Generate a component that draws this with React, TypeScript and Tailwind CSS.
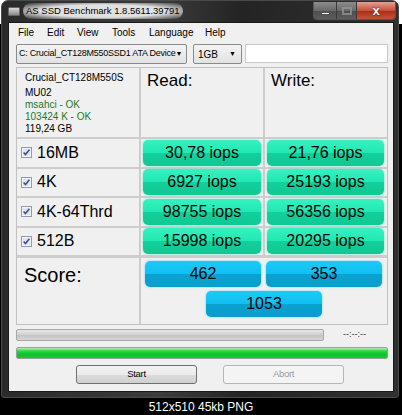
import React from "react";

type Row = { name: string; read: string; write: string };

const rows: Row[] = [
  { name: "16MB", read: "30,78 iops", write: "21,76 iops" },
  { name: "4K", read: "6927 iops", write: "25193 iops" },
  { name: "4K-64Thrd", read: "98755 iops", write: "56356 iops" },
  { name: "512B", read: "15998 iops", write: "20295 iops" },
];

const sans = "font-['Liberation_Sans',Arial,sans-serif]";

function CheckBox() {
  return (
    <svg width="11" height="11" viewBox="0 0 11 11" className="shrink-0">
      <rect x="0.5" y="0.5" width="10" height="10" fill="#f4f6fa" stroke="#8e9bb0" />
      <rect x="2" y="2" width="7" height="7" fill="#dfe6f2" />
      <path d="M2.6 5.4 L4.5 7.5 L8.4 2.8" stroke="#3b4f8a" strokeWidth="1.5" fill="none" />
    </svg>
  );
}

function Pill({ value, blue, className = "" }: { value: string; blue?: boolean; className?: string }) {
  const bg = blue
    ? "bg-[linear-gradient(#1ccaf8_0%,#10c0f2_50%,#0aa2d2_51%,#0a9ccc_100%)] shadow-[0_0_2px_#3fd0ff]"
    : "bg-[linear-gradient(#36f2c0_0%,#20e8b2_50%,#12d09c_51%,#10c894_100%)] shadow-[0_0_2px_#40f0c0]";
  return (
    <div
      className={`h-[26px] rounded-[5px] flex items-center justify-center text-[16px] text-black ${sans} ${bg} ${className}`}
    >
      {value}
    </div>
  );
}

function TitleButtons() {
  return (
    <div className="flex h-[18px] mt-px rounded-b-[4px] border border-t-0 border-[#555] overflow-hidden">
      <div className="w-[23px] flex items-center justify-center bg-[linear-gradient(#8c8c8c,#6a6a6a_50%,#4e4e4e_51%,#5c5c5c)] border-r border-[#3a3a3a]">
        <div className="w-[9px] h-[3px] bg-white border border-[#555] mt-[5px]" />
      </div>
      <div className="w-[20px] flex items-center justify-center bg-[linear-gradient(#8c8c8c,#6a6a6a_50%,#4e4e4e_51%,#5c5c5c)] border-r border-[#3a3a3a]">
        <div className="w-[10px] h-[8px] border-2 border-[#9a9a9a] opacity-70" />
      </div>
      <div className="w-[38px] flex items-center justify-center bg-[linear-gradient(#e2a090,#c8503c_50%,#a82e1a_51%,#c05438)]">
        <span className={`text-white text-[13px] font-bold leading-none ${sans} [text-shadow:0_0_2px_#500]`}>x</span>
      </div>
    </div>
  );
}

export default function App() {
  return (
    <div className="w-[402px] h-[415px] bg-black relative overflow-hidden">
      <div className="h-[24px] bg-white absolute inset-x-0 top-0" />
      {/* window */}
      <div className="relative ml-px w-[398px] h-[398px] rounded-t-[7px] rounded-b-[3px] border border-[#4a4a4a] bg-[linear-gradient(90deg,#2a2a2a,#3c3c3c_40%,#242424_60%,#303030)] flex flex-col">
        {/* title bar */}
        <div className="h-[21px] flex items-start">
          <div className="flex items-center h-[20px] pl-[6px]">
            <div className="w-[12px] h-[9px] rounded-[1px] bg-[linear-gradient(#d8d8d8,#8a8a8a)] border border-[#666] mt-px" />
            <div className={`ml-[3px] px-[3px] py-[1px] rounded-[8px] bg-[radial-gradient(ellipse_at_center,rgba(255,255,255,0.85)_55%,rgba(255,255,255,0)_100%)] text-[9.5px] text-black ${sans}`}>
              AS SSD Benchmark 1.8.5611.39791
            </div>
          </div>
          <div className="ml-auto mr-[2px]">
            <TitleButtons />
          </div>
        </div>

        {/* client area */}
        <div className="ml-[6px] w-[386px] h-[370px] bg-[#f0f0f0] border border-[#1a1a1a] flex flex-col">
          {/* menu */}
          <div className={`h-[19px] flex items-center pl-[9px] text-[10px] text-black ${sans}`}>
            <span className="w-[29px]">File</span>
            <span className="w-[30px]">Edit</span>
            <span className="w-[35px]">View</span>
            <span className="w-[37px]">Tools</span>
            <span className="w-[56px]">Language</span>
            <span>Help</span>
          </div>

          {/* drive / size selectors */}
          <div className={`mt-[2px] h-[20px] flex pl-[7px] text-black ${sans}`}>
            <div className="w-[171px] h-[20px] rounded-[2px] border border-[#8a8a8a] bg-[linear-gradient(#f4f4f4,#e2e2e2)] flex items-center pl-[2px] pr-[5px]">
              <span className="text-[9px] tracking-[-0.25px] whitespace-nowrap">C: Crucial_CT128M550SSD1 ATA Device</span>
              <span className="ml-auto shrink-0 text-[7px]">▼</span>
            </div>
            <div className="ml-[6px] w-[49px] h-[20px] rounded-[2px] border border-[#8a8a8a] bg-[linear-gradient(#f4f4f4,#e2e2e2)] flex items-center pl-[4px] pr-[5px]">
              <span className="text-[10px]">1GB</span>
              <span className="ml-auto text-[7px]">▼</span>
            </div>
            <div className="ml-[3px] w-[143px] h-[19px] bg-white border border-[#c8c8c8]" />
          </div>

          {/* results grid */}
          <div className="mt-[3px] ml-[7px] w-[372px] border border-[#c2c2c2] bg-[#f0f0f0]">
            <div className="grid grid-cols-[124px_124px_122px] h-[71px] border-b-2 border-[#cdcdcd]">
              <div className={`border-r-2 border-[#cdcdcd] pl-[8px] pt-[4px] text-[10px] leading-[12px] ${sans}`}>
                <div>Crucial_CT128M550S</div>
                <div className="mt-[3px]">MU02</div>
                <div className="text-[#1d7a1d]">msahci - OK</div>
                <div className="text-[#1d7a1d]">103424 K - OK</div>
                <div>119,24 GB</div>
              </div>
              <div className={`border-r-2 border-[#cdcdcd] pl-[6px] text-[17px] ${sans}`}>Read:</div>
              <div className={`pl-[6px] text-[17px] ${sans}`}>Write:</div>
            </div>

            {rows.map((r) => (
              <div key={r.name} className="grid grid-cols-[124px_124px_122px] h-[29.5px] border-b-2 border-[#cdcdcd]">
                <div className={`border-r-2 border-[#cdcdcd] flex items-center pl-[4px] gap-[5px] text-[16px] ${sans}`}>
                  <CheckBox />
                  <span>{r.name}</span>
                </div>
                <div className="border-r-2 border-[#cdcdcd] flex items-center pl-[2px] pr-[2px]">
                  <Pill value={r.read} className="w-full" />
                </div>
                <div className="flex items-center pl-[2px] pr-[3px]">
                  <Pill value={r.write} className="w-full" />
                </div>
              </div>
            ))}

            <div className="grid grid-cols-[124px_246px] h-[67px] border-t border-[#cdcdcd]">
              <div className={`border-r-2 border-[#cdcdcd] pl-[7px] pt-[2px] text-[20px] ${sans}`}>Score:</div>
              <div className="flex flex-col pt-[3px] pl-[4px] pr-[3px]">
                <div className="flex gap-[5px]">
                  <Pill value="462" blue className="w-[116px]" />
                  <Pill value="353" blue className="w-[116px]" />
                </div>
                <Pill value="1053" blue className="w-[116px] mt-[4px] ml-[61px]" />
              </div>
            </div>
          </div>

          {/* progress */}
          <div className="mt-[3px] ml-[7px] flex items-center h-[13px]">
            <div className="w-[308px] h-[12px] rounded-[2px] border border-[#a8a8a8] bg-[linear-gradient(#e6e6e6,#d2d2d2_45%,#c4c4c4_55%,#d6d6d6)]" />
            <span className={`ml-[19px] text-[9px] text-[#333] ${sans}`}>--:--:--</span>
          </div>
          <div className="mt-[6px] ml-[7px] w-[372px] h-[12px] rounded-[2px] border border-[#9aa09a] bg-[linear-gradient(#b8f0b8,#30d840_30%,#0ec428_60%,#16c830)]" />

          {/* buttons */}
          <div className={`mt-[6px] flex text-[9.5px] ${sans}`}>
            <div className="ml-[67px] w-[121px] h-[19px] rounded-[3px] border border-[#707070] bg-[linear-gradient(#f2f2f2,#ebebeb_50%,#dcdcdc_51%,#cfcfcf)] flex items-center justify-center tracking-[-0.3px]">
              Start
            </div>
            <div className="ml-[26px] w-[121px] h-[19px] rounded-[3px] border border-[#b6b6b6] bg-[#f4f4f4] flex items-center justify-center text-[#9a9a9a] tracking-[-0.3px]">
              Abort
            </div>
          </div>
        </div>
      </div>

      <div className={`h-[17px] flex items-center justify-center text-white text-[12px] ${sans}`}>
        512x510 45kb PNG
      </div>
    </div>
  );
}
